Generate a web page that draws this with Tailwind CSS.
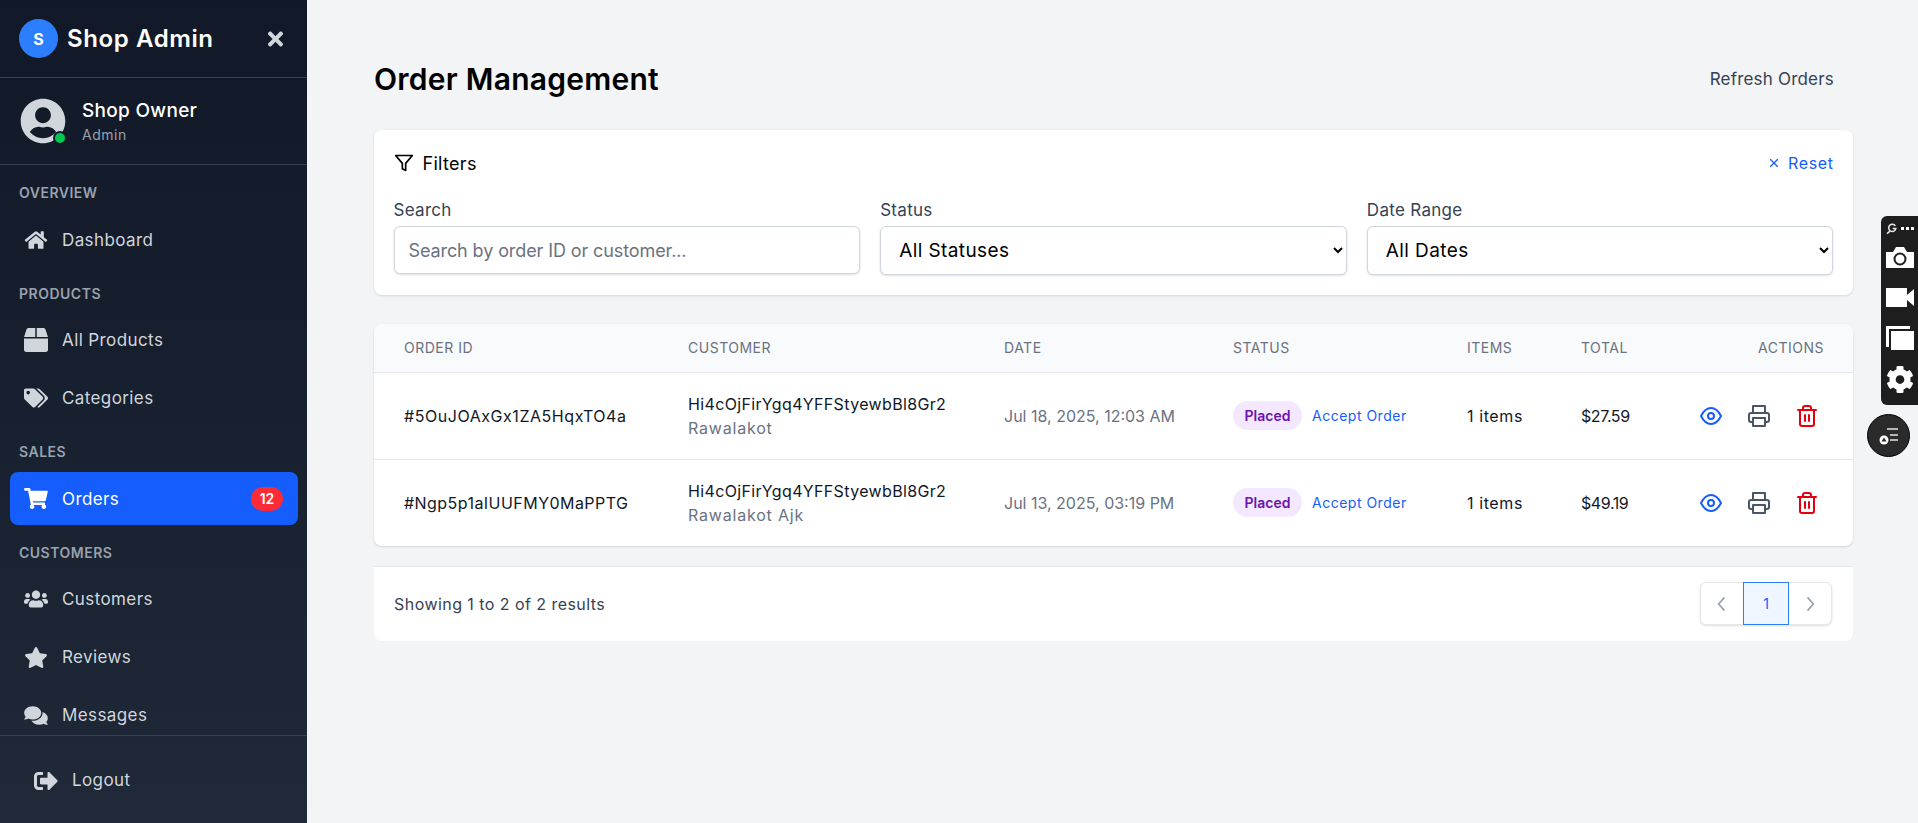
<!DOCTYPE html>
<html lang="en">
<head>
<meta charset="utf-8">
<title>Order Management</title>
<script src="https://cdn.jsdelivr.net/npm/@tailwindcss/browser@4"></script>
</head>
<body class="h-[823px] overflow-hidden bg-gray-100 font-['Inter',sans-serif]">
<div class="flex h-[823px]">

  <!-- sidebar -->
  <aside class="flex h-full w-[307px] shrink-0 flex-col bg-linear-to-b from-[#111827] to-[#1f2937] text-gray-300">
    <div class="flex h-[78px] shrink-0 items-center justify-between border-b border-gray-700 pl-[19px] pr-[23px]">
      <div class="flex items-center gap-[9px]">
        <div class="flex h-[39px] w-[39px] items-center justify-center rounded-full bg-blue-500 text-[16px] font-bold text-white">S</div>
        <span class="text-[24px] font-semibold tracking-[0.6px] text-white">Shop Admin</span>
      </div>
      <svg class="h-[22px] w-[17px] fill-gray-300" viewBox="0 0 352 512"><path d="M242.72 256l100.07-100.07c12.28-12.28 12.28-32.19 0-44.48l-22.24-22.24c-12.28-12.28-32.19-12.28-44.48 0L176 189.28 75.93 89.21c-12.28-12.28-32.19-12.28-44.48 0L9.21 111.45c-12.28 12.28-12.28 32.19 0 44.48L109.28 256 9.21 356.07c-12.28 12.28-12.28 32.19 0 44.48l22.24 22.24c12.28 12.28 32.2 12.28 44.48 0L176 322.72l100.07 100.07c12.28 12.28 32.2 12.28 44.48 0l22.24-22.24c12.28-12.28 12.28-32.19 0-44.48L242.72 256z"/></svg>
    </div>

    <div class="flex h-[87px] shrink-0 items-center gap-[16px] border-b border-gray-700 pl-[20px]">
      <div class="relative h-[46px] w-[46px]">
        <svg class="h-[46px] w-[46px] fill-gray-300" viewBox="0 0 496 512"><path d="M248 8C111 8 0 119 0 256s111 248 248 248 248-111 248-248S385 8 248 8zm0 96c48.6 0 88 39.4 88 88s-39.4 88-88 88-88-39.4-88-88 39.4-88 88-88zm0 344c-58.7 0-111.3-26.6-146.5-68.2 18.8-35.4 55.6-59.8 98.5-59.8 2.4 0 4.8.4 7.1 1.1 13 4.2 26.6 6.9 40.9 6.9 14.3 0 28-2.7 40.9-6.9 2.3-.7 4.7-1.1 7.1-1.1 42.9 0 79.7 24.4 98.5 59.8C359.3 421.4 306.7 448 248 448z"/></svg>
        <span class="absolute bottom-[-1px] right-[-1px] h-[14px] w-[14px] rounded-full border-2 border-[#141c2b] bg-green-500"></span>
      </div>
      <div>
        <div class="text-[19px] leading-[26px] font-medium tracking-[0.3px] text-white">Shop Owner</div>
        <div class="mt-[1px] text-[14px] leading-[20px] tracking-[0.5px] text-gray-400">Admin</div>
      </div>
    </div>

    <nav class="min-h-0 flex-1 overflow-hidden pt-[18px] text-[17px] tracking-[0.4px]">
      <section class="mb-[17.5px]">
        <h3 class="mb-[10px] pl-[19px] text-[14px] leading-[20px] font-semibold tracking-[0.5px] text-gray-400">OVERVIEW</h3>
        <a class="ml-[10px] mr-[9px] flex h-[53px] items-center gap-[14px] rounded-lg pl-[14px]">
          <svg class="h-[20px] w-[24px] fill-gray-300" viewBox="0 0 576 512"><path d="M280.37 148.26L96 300.11V464a16 16 0 0 0 16 16l112.06-.29a16 16 0 0 0 15.92-16V368a16 16 0 0 1 16-16h64a16 16 0 0 1 16 16v95.64a16 16 0 0 0 16 16.05L464 480a16 16 0 0 0 16-16V300L295.67 148.26a12.19 12.19 0 0 0-15.3 0zM571.6 251.47L488 182.56V44.05a12 12 0 0 0-12-12h-56a12 12 0 0 0-12 12v72.61L318.47 43a48 48 0 0 0-61 0L4.34 251.47a12 12 0 0 0-1.6 16.9l25.5 31A12 12 0 0 0 45.15 301l235.22-193.74a12.19 12.19 0 0 1 15.3 0L530.9 301a12 12 0 0 0 16.9-1.6l25.5-31a12 12 0 0 0-1.7-16.93z"/></svg>
          <span class="mt-[2px]">Dashboard</span>
        </a>
      </section>
      <section class="mb-[17.5px]">
        <h3 class="mb-[10px] pl-[19px] text-[14px] leading-[20px] font-semibold tracking-[0.5px] text-gray-400">PRODUCTS</h3>
        <a class="ml-[10px] mr-[9px] flex h-[53px] items-center gap-[14px] rounded-lg pl-[14px]">
          <svg class="h-[24px] w-[24px] fill-gray-300" viewBox="0 0 512 512"><path d="M509.5 184.6L458.9 32.8C452.4 13.2 434.1 0 413.4 0H272v192h238.7c-.4-2.5-.4-5-1.2-7.4zM240 0H98.6c-20.7 0-39 13.2-45.5 32.8L2.5 184.6c-.8 2.4-.8 4.9-1.2 7.4H240V0zM0 224v240c0 26.5 21.5 48 48 48h416c26.5 0 48-21.5 48-48V224H0z"/></svg>
          <span class="mt-[2px]">All Products</span>
        </a>
        <a class="ml-[10px] mr-[9px] mt-[5px] flex h-[53px] items-center gap-[14px] rounded-lg pl-[14px]">
          <svg class="h-[20px] w-[24px] fill-gray-300" viewBox="0 0 640 512"><path d="M497.941 225.941L286.059 14.059A48 48 0 0 0 252.118 0H48C21.49 0 0 21.49 0 48v204.118a48 48 0 0 0 14.059 33.941l211.882 211.882c18.744 18.745 49.136 18.746 67.882 0l204.118-204.118c18.745-18.745 18.745-49.137 0-67.882zM112 160c-26.51 0-48-21.49-48-48s21.49-48 48-48 48 21.49 48 48-21.49 48-48 48zm513.941 133.823L421.823 497.941c-18.745 18.745-49.137 18.745-67.882 0l-.36-.36L527.64 323.522c16.999-16.999 26.36-39.6 26.36-63.64s-9.362-46.641-26.36-63.64L331.397 0h48.721a48 48 0 0 1 33.941 14.059l211.882 211.882c18.745 18.745 18.745 49.137 0 67.882z"/></svg>
          <span class="mt-[2px]">Categories</span>
        </a>
      </section>
      <section class="mb-[17.5px]">
        <h3 class="mb-[10px] pl-[19px] text-[14px] leading-[20px] font-semibold tracking-[0.5px] text-gray-400">SALES</h3>
        <a class="ml-[10px] mr-[9px] flex h-[53px] items-center gap-[14px] rounded-lg bg-blue-600 pl-[14px] pr-[15px] text-white">
          <svg class="h-[21px] w-[24px] fill-white" viewBox="0 0 576 512"><path d="M528.12 301.319l47.273-208C578.806 78.301 567.391 64 551.99 64H159.208l-9.166-44.81C147.758 8.021 137.93 0 126.529 0H24C10.745 0 0 10.745 0 24v16c0 13.255 10.745 24 24 24h69.883l70.248 343.435C147.325 417.1 136 435.222 136 456c0 30.928 25.072 56 56 56s56-25.072 56-56c0-15.674-6.447-29.835-16.824-40h209.647C430.447 426.165 424 440.326 424 456c0 30.928 25.072 56 56 56s56-25.072 56-56c0-22.172-12.888-41.332-31.579-50.405l5.517-24.276c3.413-15.018-8.002-29.319-23.403-29.319H218.117l-6.545-32h293.145c11.206 0 20.92-7.754 23.403-18.681z"/></svg>
          <span class="mt-[2px]">Orders</span>
          <span class="ml-auto flex h-[24px] w-[32px] items-center justify-center rounded-full bg-red-500 text-[14px] font-semibold tracking-normal">12</span>
        </a>
      </section>
      <section>
        <h3 class="mb-[10px] pl-[19px] text-[14px] leading-[20px] font-semibold tracking-[0.5px] text-gray-400">CUSTOMERS</h3>
        <a class="ml-[10px] mr-[9px] flex h-[53px] items-center gap-[14px] rounded-lg pl-[14px]">
          <svg class="h-[20px] w-[24px] fill-gray-300" viewBox="0 0 640 512"><path d="M96 224c35.3 0 64-28.7 64-64s-28.7-64-64-64-64 28.7-64 64 28.7 64 64 64zm448 0c35.3 0 64-28.7 64-64s-28.7-64-64-64-64 28.7-64 64 28.7 64 64 64zm32 32h-64c-17.6 0-33.5 7.1-45.1 18.6 40.3 22.1 68.9 62 75.1 109.4h66c17.7 0 32-14.3 32-32v-32c0-35.3-28.7-64-64-64zm-256 0c61.9 0 112-50.1 112-112S381.9 32 320 32 208 82.1 208 144s50.1 112 112 112zm76.8 32h-8.3c-20.8 10-43.9 16-68.5 16s-47.6-6-68.5-16h-8.3C179.6 288 128 339.6 128 403.2V432c0 26.5 21.5 48 48 48h288c26.5 0 48-21.5 48-48v-28.8c0-63.6-51.6-115.2-115.2-115.2zm-223.7-13.4C161.5 263.1 145.6 256 128 256H64c-35.3 0-64 28.7-64 64v32c0 17.7 14.3 32 32 32h65.9c6.3-47.4 34.9-87.3 75.2-109.4z"/></svg>
          <span class="mt-[2px]">Customers</span>
        </a>
        <a class="ml-[10px] mr-[9px] mt-[5px] flex h-[53px] items-center gap-[14px] rounded-lg pl-[14px]">
          <svg class="h-[21px] w-[24px] fill-gray-300" viewBox="0 0 576 512"><path d="M259.3 17.8L194 150.2 47.9 171.5c-26.2 3.8-36.7 36.1-17.7 54.6l105.7 103-25 145.5c-4.5 26.3 23.2 46 46.4 33.7L288 439.6l130.7 68.7c23.2 12.2 50.9-7.4 46.4-33.7l-25-145.5 105.7-103c19-18.5 8.5-50.8-17.7-54.6L382 150.2 316.7 17.8c-11.7-23.6-45.6-23.9-57.4 0z"/></svg>
          <span class="mt-[2px]">Reviews</span>
        </a>
        <a class="ml-[10px] mr-[9px] mt-[5px] flex h-[53px] items-center gap-[14px] rounded-lg pl-[14px]">
          <svg class="h-[21px] w-[24px] fill-gray-300" viewBox="0 0 576 512"><path d="M416 192c0-88.4-93.1-160-208-160S0 103.6 0 192c0 34.3 14.1 65.9 38 92-13.4 30.2-35.5 54.2-35.8 54.5-2.2 2.3-2.8 5.7-1.5 8.7S4.8 352 8 352c36.6 0 66.9-12.3 88.7-25 32.2 15.7 70.3 25 111.3 25 114.9 0 208-71.6 208-160zm122 220c23.9-26 38-57.7 38-92 0-66.9-53.5-124.2-129.3-148.1.9 6.6 1.3 13.3 1.3 20.1 0 105.9-107.7 192-240 192-10.8 0-21.3-.8-31.7-1.9C207.8 439.6 281.8 480 368 480c41 0 79.1-9.2 111.3-25 21.8 12.7 52.1 25 88.7 25 3.2 0 6.1-1.9 7.3-4.8 1.3-2.9.7-6.3-1.5-8.7-.3-.3-22.4-24.2-35.8-54.5z"/></svg>
          <span class="mt-[2px]">Messages</span>
        </a>
      </section>
    </nav>

    <div class="flex h-[88px] shrink-0 items-center gap-[14px] border-t border-gray-700 pt-[2px] pl-[34px] text-[17px] tracking-[0.4px]">
      <svg class="h-[24px] w-[24px] fill-gray-300" viewBox="0 0 512 512"><path d="M497 273L329 441c-15 15-41 4.5-41-17v-96H152c-13.3 0-24-10.7-24-24v-96c0-13.3 10.7-24 24-24h136V88c0-21.4 25.9-32 41-17l168 168c9.3 9.4 9.3 24.6 0 34zM192 436v-40c0-6.6-5.4-12-12-12H96c-17.7 0-32-14.3-32-32V160c0-17.7 14.3-32 32-32h84c6.6 0 12-5.4 12-12V76c0-6.6-5.4-12-12-12H96c-53 0-96 43-96 96v192c0 53 43 96 96 96h84c6.6 0 12-5.4 12-12z"/></svg>
      Logout
    </div>
  </aside>

  <!-- main -->
  <main class="min-w-0 flex-1 pl-[67px] pr-[65px] pt-[58px]">
    <div class="mb-[30px] flex h-[42px] items-center justify-between">
      <h1 class="text-[30px] font-semibold tracking-[0.25px] text-black">Order Management</h1>
      <button class="mt-[2px] pr-[19px] text-[17px] tracking-[0.2px] text-gray-700">Refresh Orders</button>
    </div>

    <div class="mb-[29px] h-[165px] rounded-lg bg-white px-[19.5px] pt-[20px] shadow-sm">
      <div class="flex h-[26px] items-center justify-between">
        <div class="flex items-center gap-[9px] text-[18px] tracking-[0.3px] text-black">
          <svg class="h-[20px] w-[20px]" viewBox="0 0 24 24" fill="none" stroke="currentColor" stroke-width="2" stroke-linejoin="round" stroke-linecap="round"><polygon points="22 3 2 3 10 12.46 10 19 14 21 14 12.46 22 3"/></svg>
          Filters
        </div>
        <button class="flex items-center gap-[7px] text-[16px] tracking-[0.6px] text-blue-600">
          <svg class="h-[14px] w-[14px]" viewBox="0 0 24 24" fill="none" stroke="currentColor" stroke-width="2" stroke-linecap="round"><line x1="18" y1="6" x2="6" y2="18"/><line x1="6" y1="6" x2="18" y2="18"/></svg>
          Reset
        </button>
      </div>
      <div class="mt-[22px] grid grid-cols-3 gap-[20px]">
        <label class="block text-[17px] leading-[24px] tracking-[0.3px] text-gray-700">Search
          <input class="mt-[4px] block h-[48px] w-full rounded-md border border-gray-300 bg-white px-[14px] text-[18px] tracking-[-0.1px] text-black shadow-sm placeholder:text-gray-500" placeholder="Search by order ID or customer...">
        </label>
        <label class="block text-[17px] leading-[24px] tracking-[0.3px] text-gray-700">Status
          <select class="mt-[4px] block h-[49px] w-full rounded-md border border-gray-300 bg-white px-[14px] text-[19px] tracking-[0.4px] text-black shadow-sm"><option>All Statuses</option></select>
        </label>
        <label class="block text-[17px] leading-[24px] tracking-[0.3px] text-gray-700">Date Range
          <select class="mt-[4px] block h-[49px] w-full rounded-md border border-gray-300 bg-white px-[14px] text-[19px] tracking-[0.4px] text-black shadow-sm"><option>All Dates</option></select>
        </label>
      </div>
    </div>

    <div class="overflow-hidden rounded-lg bg-white shadow-sm">
      <table class="w-full table-fixed text-left text-[16px] text-gray-900">
        <colgroup><col class="w-[285px]"><col class="w-[316px]"><col class="w-[229px]"><col class="w-[234px]"><col class="w-[114px]"><col class="w-[110px]"><col></colgroup>
        <thead class="border-b border-gray-200 bg-gray-50 text-[14px] text-gray-500">
          <tr class="h-[48px]">
            <th class="pl-[30px] font-normal tracking-[0.5px]">ORDER ID</th>
            <th class="pl-[29px] font-normal tracking-[0.5px]">CUSTOMER</th>
            <th class="pl-[29px] font-normal tracking-[0.5px]">DATE</th>
            <th class="pl-[29px] font-normal tracking-[0.5px]">STATUS</th>
            <th class="pl-[29px] font-normal tracking-[0.5px]">ITEMS</th>
            <th class="pl-[29px] font-normal tracking-[0.5px]">TOTAL</th>
            <th class="pr-[29px] text-right font-normal tracking-[0.5px]">ACTIONS</th>
          </tr>
        </thead>
        <tbody>
          <tr class="h-[87px] border-b border-gray-200">
            <td class="pl-[30px] whitespace-nowrap tracking-[0.55px]">#5OuJOAxGx1ZA5HqxTO4a</td>
            <td class="pl-[29px] whitespace-nowrap">
              <div class="leading-[24px] tracking-[0.35px]">Hi4cOjFirYgq4YFFStyewbBl8Gr2</div>
              <div class="leading-[24px] tracking-[0.8px] text-gray-500">Rawalakot</div>
            </td>
            <td class="pl-[29px] whitespace-nowrap text-gray-500">Jul 18, 2025, 12:03 AM</td>
            <td class="pl-[29px] whitespace-nowrap">
              <div class="flex items-center gap-[10px]">
                <span class="flex h-[29px] w-[69px] items-center justify-center rounded-full bg-purple-100 text-[14px] font-semibold text-purple-800">Placed</span>
                <button class="text-[14px] tracking-[0.5px] text-blue-600">Accept Order</button>
              </div>
            </td>
            <td class="pl-[29px] whitespace-nowrap tracking-[0.6px]">1 items</td>
            <td class="pl-[29px] whitespace-nowrap tracking-[-0.4px]">$27.59</td>
            <td class="pr-[34px]">
              <div class="flex items-center justify-end gap-[24px]">
                <svg class="h-[24px] w-[24px] text-blue-600" viewBox="0 0 24 24" fill="none" stroke="currentColor" stroke-width="2" stroke-linejoin="round"><path d="M2 12C5 6 9 4 12 4s7 2 10 8c-3 6-7 8-10 8s-7-2-10-8z"/><circle cx="12" cy="12" r="3"/></svg>
                <svg class="h-[24px] w-[24px] text-gray-600" viewBox="0 0 24 24" fill="none" stroke="currentColor" stroke-width="2" stroke-linecap="round" stroke-linejoin="round"><polyline points="6 9 6 2 18 2 18 9"/><path d="M6 18H4a2 2 0 0 1-2-2v-5a2 2 0 0 1 2-2h16a2 2 0 0 1 2 2v5a2 2 0 0 1-2 2h-2"/><rect x="6" y="14" width="12" height="8"/></svg>
                <svg class="h-[24px] w-[24px] text-red-600" viewBox="0 0 24 24" fill="none" stroke="currentColor" stroke-width="2" stroke-linecap="round" stroke-linejoin="round"><polyline points="3 6 5 6 21 6"/><path d="M19 6v14a2 2 0 0 1-2 2H7a2 2 0 0 1-2-2V6m3 0V4a2 2 0 0 1 2-2h4a2 2 0 0 1 2 2v2"/><line x1="10" y1="11" x2="10" y2="17"/><line x1="14" y1="11" x2="14" y2="17"/></svg>
              </div>
            </td>
          </tr>
          <tr class="h-[87px]">
            <td class="pl-[30px] whitespace-nowrap tracking-[0.45px]">#Ngp5p1aIUUFMY0MaPPTG</td>
            <td class="pl-[29px] whitespace-nowrap">
              <div class="leading-[24px] tracking-[0.35px]">Hi4cOjFirYgq4YFFStyewbBl8Gr2</div>
              <div class="leading-[24px] tracking-[0.8px] text-gray-500">Rawalakot Ajk</div>
            </td>
            <td class="pl-[29px] whitespace-nowrap text-gray-500">Jul 13, 2025, 03:19 PM</td>
            <td class="pl-[29px] whitespace-nowrap">
              <div class="flex items-center gap-[10px]">
                <span class="flex h-[29px] w-[69px] items-center justify-center rounded-full bg-purple-100 text-[14px] font-semibold text-purple-800">Placed</span>
                <button class="text-[14px] tracking-[0.5px] text-blue-600">Accept Order</button>
              </div>
            </td>
            <td class="pl-[29px] whitespace-nowrap tracking-[0.6px]">1 items</td>
            <td class="pl-[29px] whitespace-nowrap tracking-[-0.4px]">$49.19</td>
            <td class="pr-[34px]">
              <div class="flex items-center justify-end gap-[24px]">
                <svg class="h-[24px] w-[24px] text-blue-600" viewBox="0 0 24 24" fill="none" stroke="currentColor" stroke-width="2" stroke-linejoin="round"><path d="M2 12C5 6 9 4 12 4s7 2 10 8c-3 6-7 8-10 8s-7-2-10-8z"/><circle cx="12" cy="12" r="3"/></svg>
                <svg class="h-[24px] w-[24px] text-gray-600" viewBox="0 0 24 24" fill="none" stroke="currentColor" stroke-width="2" stroke-linecap="round" stroke-linejoin="round"><polyline points="6 9 6 2 18 2 18 9"/><path d="M6 18H4a2 2 0 0 1-2-2v-5a2 2 0 0 1 2-2h16a2 2 0 0 1 2 2v5a2 2 0 0 1-2 2h-2"/><rect x="6" y="14" width="12" height="8"/></svg>
                <svg class="h-[24px] w-[24px] text-red-600" viewBox="0 0 24 24" fill="none" stroke="currentColor" stroke-width="2" stroke-linecap="round" stroke-linejoin="round"><polyline points="3 6 5 6 21 6"/><path d="M19 6v14a2 2 0 0 1-2 2H7a2 2 0 0 1-2-2V6m3 0V4a2 2 0 0 1 2-2h4a2 2 0 0 1 2 2v2"/><line x1="10" y1="11" x2="10" y2="17"/><line x1="14" y1="11" x2="14" y2="17"/></svg>
              </div>
            </td>
          </tr>
        </tbody>
      </table>
    </div>

    <div class="mt-[20px] flex h-[75px] items-center justify-between rounded-b-lg border-t border-gray-200 bg-white pb-[1px] pl-[20px] pr-[21px]">
      <span class="text-[16px] tracking-[0.45px] text-gray-700">Showing 1 to 2 of 2 results</span>
      <div class="flex h-[43px] w-[132px] rounded-md border border-gray-200 bg-white shadow-sm">
        <div class="flex w-[42px] items-center justify-center text-gray-400">
          <svg class="h-[20px] w-[20px]" viewBox="0 0 24 24" fill="none" stroke="currentColor" stroke-width="2"><polyline points="15 4 8 12 15 20"/></svg>
        </div>
        <div class="relative z-10 -my-px flex w-[46px] items-center justify-center border border-blue-500 bg-blue-50 text-[14px] text-blue-600">1</div>
        <div class="flex w-[42px] items-center justify-center text-gray-400">
          <svg class="h-[20px] w-[20px]" viewBox="0 0 24 24" fill="none" stroke="currentColor" stroke-width="2"><polyline points="9 4 16 12 9 20"/></svg>
        </div>
      </div>
    </div>
  </main>
</div>

<!-- floating capture toolbar -->
<div class="absolute right-0 top-[216px] flex h-[189px] w-[37px] flex-col items-center rounded-l-md bg-[#1e1e1e] pl-[1px]">
  <div class="mt-[6px] flex h-[13px] w-[28px] items-center gap-[3px]">
    <svg class="h-[13px] w-[13px]" viewBox="0 0 24 24" fill="none" stroke="#e5e5e5" stroke-width="3"><path d="M18 7a7 7 0 1 0 1 5h-6"/><path d="M2 22l6-5"/></svg>
    <span class="h-[3px] w-[3px] bg-white"></span><span class="-ml-[1px] h-[3px] w-[3px] bg-white"></span><span class="-ml-[1px] h-[3px] w-[3px] bg-white"></span>
  </div>
  <svg class="mt-[12px] h-[21px] w-[28px]" viewBox="0 0 28 21"><path fill="#fff" fill-rule="evenodd" d="M0 5h7l3-5h8l3 5h7v16H0zM14 5.500a6.500 6.500 0 1 0 0 13 6.500 6.500 0 0 0 0-13zm0 2a4.500 4.500 0 1 1 0 9 4.500 4.500 0 0 1 0-9z"/></svg>
  <svg class="mt-[20px] h-[19px] w-[28px]" viewBox="0 0 28 19"><path fill="#fff" d="M0 0h21v7l7-6v17l-7-6v7H0z"/></svg>
  <svg class="mt-[19px] h-[24px] w-[28px]" viewBox="0 0 28 24"><path fill="#fff" d="M0 0h24v3H3v18H0zM5 5h23v19H5z"/></svg>
  <svg class="mt-[15px] h-[29px] w-[28px] fill-white" viewBox="0 0 512 512"><path d="M487.400 315.700l-42.600-24.600c4.300-23.200 4.300-47 0-70.200l42.600-24.600c4.900-2.800 7.100-8.600 5.500-14-11.100-35.600-30-67.800-54.700-94.600-3.800-4.100-10-5.100-14.800-2.300L380.800 110c-17.900-15.400-38.500-27.300-60.800-35.100V25.800c0-5.600-3.900-10.500-9.400-11.700-36.700-8.200-74.300-7.800-109.200 0-5.500 1.200-9.400 6.100-9.400 11.700V75c-22.200 7.900-42.800 19.800-60.800 35.100L88.700 85.500c-4.900-2.800-11-1.900-14.800 2.300-24.700 26.700-43.600 58.900-54.700 94.600-1.700 5.400.6 11.200 5.500 14L67.300 221c-4.300 23.200-4.300 47 0 70.200l-42.600 24.600c-4.900 2.800-7.100 8.600-5.500 14 11.100 35.600 30 67.800 54.700 94.600 3.800 4.100 10 5.100 14.800 2.300l42.600-24.600c17.900 15.400 38.500 27.300 60.800 35.100v49.200c0 5.600 3.900 10.500 9.400 11.700 36.700 8.200 74.300 7.800 109.200 0 5.500-1.200 9.400-6.100 9.400-11.700v-49.200c22.200-7.900 42.800-19.800 60.800-35.100l42.600 24.600c4.900 2.800 11 1.900 14.800-2.300 24.700-26.700 43.600-58.900 54.700-94.600 1.500-5.500-.7-11.300-5.600-14.100zM256 336c-44.100 0-80-35.900-80-80s35.900-80 80-80 80 35.900 80 80-35.900 80-80 80z"/></svg>
</div>
<div class="absolute left-[1867px] top-[414px] flex h-[43px] w-[43px] items-center justify-center rounded-full border border-black bg-[#2b2b2b]">
  <svg class="h-[24px] w-[24px]" viewBox="0 0 24 24" fill="none"><path d="M10 5h11M13 11h8M13 16h8" stroke="#e5e5e5" stroke-width="1.500"/><circle cx="7" cy="16" r="4.500" fill="#fff"/><path d="M7 13.500l2.500 4h-5z" fill="#2b2b2b"/></svg>
</div>
</body>
</html>
